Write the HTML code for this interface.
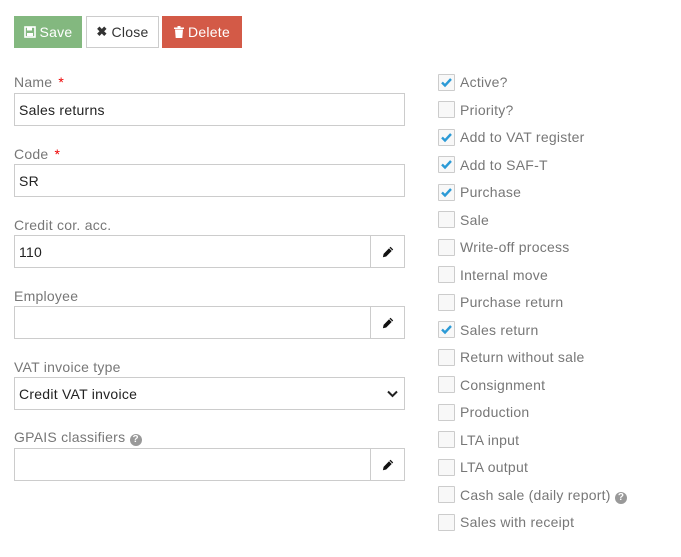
<!DOCTYPE html>
<html><head><meta charset="utf-8"><style>
*{box-sizing:border-box;margin:0;padding:0}
body{width:681px;height:557px;background:#fff;font-family:"Liberation Sans",sans-serif;font-size:14px;color:#333;position:relative;overflow:hidden;letter-spacing:0.25px}
.btn{position:absolute;top:16px;height:32px;display:flex;align-items:center;justify-content:center;font-size:14px;gap:4px}
.lbl{position:absolute;left:14px;color:#777;font-size:14px}
.req{color:#e00;margin-left:6px}
.inp{position:absolute;left:14px;width:391px;height:33px;border:1px solid #ccc;padding:0 4px;display:flex;align-items:center;color:#222}
.add{position:absolute;right:-1px;top:-1px;width:35px;height:33px;border:1px solid #ccc;display:flex;align-items:center;justify-content:center}
.cb{position:absolute;left:438px;width:17px;height:17px;border:1px solid #ccc;background:#f8f8f8;border-radius:1px}
.ct{position:absolute;left:460px;color:#777;font-size:14px}
</style></head><body>
<div class="btn" style="left:14px;width:68px;background:#83b87f;color:#fff"><svg width="12" height="12" viewBox="0 0 12 12"><rect x="1" y="1" width="10" height="10" fill="none" stroke="#fff" stroke-width="1.6"/><rect x="3" y="1" width="5" height="3.5" fill="#fff"/><rect x="3" y="7" width="6" height="3" fill="#fff"/></svg>Save</div>
<div class="btn" style="left:86px;width:73px;border:1px solid #ccc;color:#333"><b style="font-size:13px">✖</b>Close</div>
<div class="btn" style="left:162px;width:80px;background:#d35a47;color:#fff"><svg width="10" height="12" viewBox="0 0 10 12"><rect x="0" y="1.5" width="10" height="1.5" fill="#fff"/><rect x="3.5" y="0" width="3" height="2" fill="#fff"/><path d="M1 3.5h8l-0.7 8.5h-6.6z" fill="#fff"/></svg>Delete</div>

<div class="lbl" style="top:74px">Name<span class="req">*</span></div>
<div class="inp" style="top:93px">Sales returns</div>
<div class="lbl" style="top:146px">Code<span class="req">*</span></div>
<div class="inp" style="top:164px">SR</div>
<div class="lbl" style="top:217px">Credit cor. acc.</div>
<div class="inp" style="top:235px">110<div class="add"><svg width="12" height="12" viewBox="0 0 12 12"><path d="M8.5 0.8l2.7 2.7-7 7-3.3 0.7 0.7-3.3z" fill="#111"/><path d="M7.3 2l2.7 2.7" stroke="#fff" stroke-width="0.8"/></svg></div></div>
<div class="lbl" style="top:288px">Employee</div>
<div class="inp" style="top:306px"><div class="add"><svg width="12" height="12" viewBox="0 0 12 12"><path d="M8.5 0.8l2.7 2.7-7 7-3.3 0.7 0.7-3.3z" fill="#111"/><path d="M7.3 2l2.7 2.7" stroke="#fff" stroke-width="0.8"/></svg></div></div>
<div class="lbl" style="top:359px">VAT invoice type</div>
<div class="inp" style="top:377px">Credit VAT invoice<svg style="position:absolute;right:6px;top:12px" width="11" height="8" viewBox="0 0 11 8"><path d="M1 1.5l4.5 4.5 4.5-4.5" fill="none" stroke="#222" stroke-width="2"/></svg></div>
<div class="lbl" style="top:429px">GPAIS classifiers <span style="display:inline-block;width:12px;height:12px;border-radius:50%;background:#999;color:#fff;font-size:10px;text-align:center;line-height:12px;font-weight:bold;letter-spacing:0">?</span></div>
<div class="inp" style="top:448px"><div class="add"><svg width="12" height="12" viewBox="0 0 12 12"><path d="M8.5 0.8l2.7 2.7-7 7-3.3 0.7 0.7-3.3z" fill="#111"/><path d="M7.3 2l2.7 2.7" stroke="#fff" stroke-width="0.8"/></svg></div></div>

<div id="cbs"></div>
<script>
var items=[["Active?",1],["Priority?",0],["Add to VAT register",1],["Add to SAF-T",1],["Purchase",1],["Sale",0],["Write-off process",0],["Internal move",0],["Purchase return",0],["Sales return",1],["Return without sale",0],["Consignment",0],["Production",0],["LTA input",0],["LTA output",0],["Cash sale (daily report)",0],["Sales with receipt",0]];
var h="";items.forEach(function(it,i){var c=82+i*27.5;
h+='<div class="cb" style="top:'+(c-8.5)+'px">'+(it[1]?'<svg width="15" height="15" viewBox="0 0 15 15"><path d="M3 7.5l3 3 6-6.5" fill="none" stroke="#2b9ad6" stroke-width="2.4"/></svg>':'')+'</div>';
h+='<div class="ct" style="top:'+(c-8)+'px">'+it[0]+(i==15?' <span style="display:inline-block;width:12px;height:12px;border-radius:50%;background:#999;color:#fff;font-size:10px;text-align:center;line-height:12px;font-weight:bold;letter-spacing:0">?</span>':'')+'</div>';});
document.getElementById("cbs").innerHTML=h;
</script>
</body></html>
